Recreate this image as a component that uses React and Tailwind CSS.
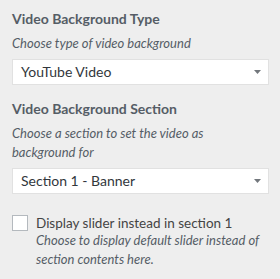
import React from "react";

const font = { fontFamily: "Lato, 'Open Sans', sans-serif" };

const Caret = () => (
  <svg width="7" height="4" viewBox="0 0 7 4" className="shrink-0">
    <path d="M0 0h7L3.5 4z" fill="#72777c" />
  </svg>
);

const SelectBox = ({ value }) => (
  <div className="mt-[6px] mr-[11px] flex h-[26px] items-center justify-between border border-[#e1e1e1] bg-white pl-[8px] pr-[7px] text-[14px] leading-[20px] text-[#32373c]">
    <span>{value}</span>
    <Caret />
  </div>
);

const Title = ({ children, className = "" }) => (
  <div className={`text-[14px] font-bold leading-[20px] text-[#555d66] ${className}`}>
    {children}
  </div>
);

const Desc = ({ children, className = "" }) => (
  <div className={`text-[13px] italic leading-[19px] text-[#555d66] ${className}`}>
    {children}
  </div>
);

export default function App() {
  return (
    <div className="h-[279px] w-[280px] bg-[#eeeeee] pl-[12px] pt-[9px]" style={font}>
      <Title>Video Background Type</Title>
      <Desc className="mt-[5px]">Choose type of video background</Desc>
      <SelectBox value="YouTube Video" />

      <Title className="mt-[14px]">Video Background Section</Title>
      <Desc className="mt-[5px] pr-[20px]">
        Choose a section to set the video as background for
      </Desc>
      <SelectBox value="Section 1 - Banner" />

      <div className="mt-[21px] flex gap-[8px]">
        <div className="h-[16px] w-[16px] shrink-0 border border-[#b4b9be] bg-white" />
        <div className="pr-[8px]">
          <div className="text-[13.5px] leading-[17px] text-[#444444]">
            Display slider instead in section 1
          </div>
          <Desc className="-mt-[1px]">
            Choose to display default slider instead of section contents here.
          </Desc>
        </div>
      </div>
    </div>
  );
}
